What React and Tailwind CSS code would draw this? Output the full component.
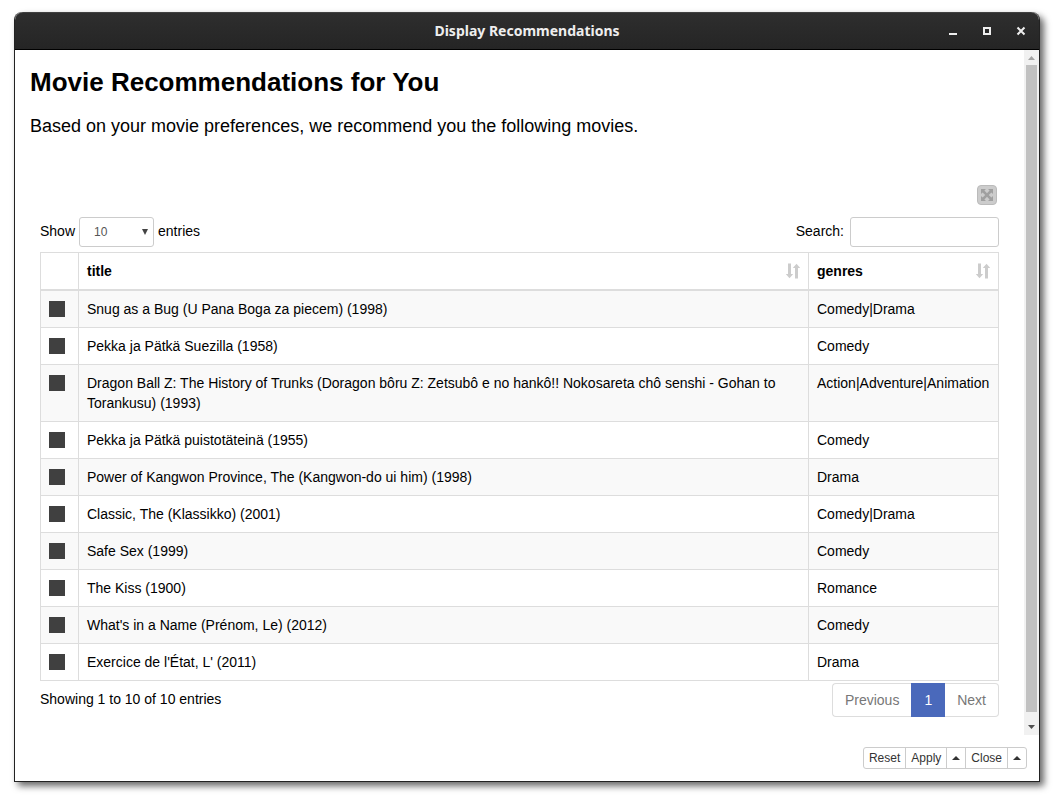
const movies = [
  ["Snug as a Bug (U Pana Boga za piecem) (1998)", "Comedy|Drama"],
  ["Pekka ja Pätkä Suezilla (1958)", "Comedy"],
  ["Dragon Ball Z: The History of Trunks (Doragon bôru Z: Zetsubô e no hankô!! Nokosareta chô senshi - Gohan to Torankusu) (1993)", "Action|Adventure|Animation"],
  ["Pekka ja Pätkä puistotäteinä (1955)", "Comedy"],
  ["Power of Kangwon Province, The (Kangwon-do ui him) (1998)", "Drama"],
  ["Classic, The (Klassikko) (2001)", "Comedy|Drama"],
  ["Safe Sex (1999)", "Comedy"],
  ["The Kiss (1900)", "Romance"],
  ["What's in a Name (Prénom, Le) (2012)", "Comedy"],
  ["Exercice de l'État, L' (2011)", "Drama"],
];

function SortIcon() {
  return (
    <svg width="14" height="16" viewBox="0 0 14 16" fill="#cccccc" aria-hidden="true">
      <path d="M2 .5h3V11h2.200L3.500 15.200-.2 11H2z" />
      <path d="M9 15.500h3V5h2.200L10.500.800 6.800 5H9z" />
    </svg>
  );
}

function HeaderCell({ children, className }) {
  return (
    <th scope="col" className={`border border-b-2 border-[#dddddd] p-2 text-left font-bold ${className}`}>
      <div className="flex items-center justify-between">
        {children}
        <button type="button" aria-label={`Sort by ${children}`}><SortIcon /></button>
      </div>
    </th>
  );
}

function TitleBar() {
  return (
    <header className="grid h-[38px] grid-cols-[1fr_auto_1fr] items-center rounded-t-lg border-t border-b border-t-[#404040] border-b-black bg-linear-to-b from-[#2e2e2e] to-[#252525] text-[#eeeeee]">
      <h1 className="col-start-2 font-['Noto_Sans',sans-serif] text-sm font-bold">Display Recommendations</h1>
      <div className="flex justify-end gap-[14px] pr-2">
        <button type="button" aria-label="Minimize" className="flex size-5 items-center justify-center">
          <svg width="10" height="10" viewBox="0 0 10 10"><path d="M1 7h8v2H1z" fill="#eeeeee" /></svg>
        </button>
        <button type="button" aria-label="Maximize" className="flex size-5 items-center justify-center">
          <svg width="10" height="10" viewBox="0 0 10 10"><path d="M2 2h6v6H2z" fill="none" stroke="#eeeeee" strokeWidth="2" /></svg>
        </button>
        <button type="button" aria-label="Close window" className="flex size-5 items-center justify-center">
          <svg width="10" height="10" viewBox="0 0 10 10"><path d="M1.500 1.500l7 7M8.500 1.500l-7 7" stroke="#eeeeee" strokeWidth="2" /></svg>
        </button>
      </div>
    </header>
  );
}

function ScrollBar() {
  return (
    <div className="flex w-[15px] shrink-0 flex-col items-center bg-[#f1f1f1]" aria-hidden="true">
      <svg width="15" height="15" viewBox="0 0 15 15"><path d="M4 10l3.500-4 3.500 4z" fill="#a3a3a3" /></svg>
      <div className="w-[11px] flex-1 bg-[#c1c1c1]" />
      <svg className="mt-2" width="15" height="15" viewBox="0 0 15 15"><path d="M4 5l3.500 4L11 5z" fill="#505050" /></svg>
    </div>
  );
}

function Caret() {
  return (
    <svg width="8" height="4" viewBox="0 0 8 4" aria-hidden="true"><path d="M0 4l4-4 4 4z" fill="#333333" /></svg>
  );
}

function Footer() {
  const cell = "flex items-center border-l border-[#cccccc] px-[5px] first:border-l-0";
  return (
    <footer className="flex justify-end px-3 pt-3 pb-3">
      <div className="flex h-[22px] rounded-[3px] border border-[#cccccc] font-['Liberation_Sans',Arial,sans-serif] text-xs text-[#333333]">
        <button type="button" className={cell}>Reset</button>
        <button type="button" className={cell}>Apply</button>
        <button type="button" className={cell} aria-label="Apply options"><Caret /></button>
        <button type="button" className={cell}>Close</button>
        <button type="button" className={cell} aria-label="Close options"><Caret /></button>
      </div>
    </footer>
  );
}

export default function App() {
  return (
    <div className="min-h-screen bg-white pt-3 pr-[18px] pb-[18px] pl-[14px] font-['Liberation_Sans',Arial,sans-serif] text-sm text-black">
      <div className="rounded-t-lg border-x border-b border-[#222222] bg-white shadow-[4px_4px_7px_0_rgba(0,0,0,0.6)]">
        <TitleBar />
        <div className="flex">
          <main className="min-w-0 flex-1 px-[15px] pb-[18px]">
            <h2 className="pt-4 text-[26px] leading-8 font-bold">Movie Recommendations for You</h2>
            <p className="mt-4 text-lg leading-6">Based on your movie preferences, we recommend you the following movies.</p>
            <section className="mt-[47px] px-[10px]">
              <div className="flex justify-end pr-[2px]">
                <button type="button" aria-label="Expand table" className="flex size-5 items-center justify-center rounded-[4px] border border-[#bbbbbb] bg-[#cccccc]">
                  <svg width="12" height="12" viewBox="0 0 12 12" fill="#a0a0a0">
                    <path d="M0 0h5L3.400 1.600 6 4.200l2.600-2.600L7 0h5v5l-1.600-1.600L7.800 6l2.600 2.600L12 7v5H7l1.600-1.600L6 7.800l-2.600 2.600L5 12H0V7l1.600 1.600L4.200 6 1.600 3.400 0 5z" />
                  </svg>
                </button>
              </div>
              <div className="mt-3 flex items-start justify-between leading-7">
                <label className="flex items-start gap-1">
                  Show
                  <span className="relative flex">
                    <select defaultValue="10" className="h-[30px] w-[75px] appearance-none rounded-[3px] border border-[#cccccc] bg-white pl-[14px] text-xs text-[#555555]">
                      <option>10</option>
                      <option>25</option>
                      <option>50</option>
                    </select>
                    <svg className="pointer-events-none absolute top-3 right-[6px]" width="6" height="6" viewBox="0 0 6 6" aria-hidden="true"><path d="M0 0h6L3 6z" fill="#444444" /></svg>
                  </span>
                  entries
                </label>
                <label className="flex items-start gap-[6px]">
                  Search:
                  <input type="search" className="h-[30px] w-[149px] rounded-[3px] border border-[#cccccc] bg-white px-2 text-xs" />
                </label>
              </div>
              <table className="mt-[5px] w-full border-collapse leading-5">
                <thead>
                  <tr>
                    <th className="w-[38px] border border-b-2 border-[#dddddd]"></th>
                    <HeaderCell className="">title</HeaderCell>
                    <HeaderCell className="w-[190px]">genres</HeaderCell>
                  </tr>
                </thead>
                <tbody>
                  {movies.map(([title, genres]) => (
                    <tr key={title} className="align-top odd:bg-[#f9f9f9]">
                      <td className="border border-[#dddddd] px-2 py-[10px]">
                        <input type="checkbox" aria-label={title} className="block size-4 appearance-none bg-[#404040]" />
                      </td>
                      <td className="border border-[#dddddd] p-2">{title}</td>
                      <td className="border border-[#dddddd] p-2">{genres}</td>
                    </tr>
                  ))}
                </tbody>
              </table>
              <div className="mt-[2px] flex items-start justify-between">
                <p className="leading-8">Showing 1 to 10 of 10 entries</p>
                <nav aria-label="Table pages" className="flex h-[34px] leading-5 text-[#777777]">
                  <button type="button" className="rounded-l border border-r-0 border-[#dddddd] px-3">Previous</button>
                  <button type="button" aria-current="page" className="bg-[#4a69bb] px-[13px] text-white">1</button>
                  <button type="button" className="rounded-r border border-l-0 border-[#dddddd] px-3">Next</button>
                </nav>
              </div>
            </section>
          </main>
          <ScrollBar />
        </div>
        <Footer />
      </div>
    </div>
  );
}
